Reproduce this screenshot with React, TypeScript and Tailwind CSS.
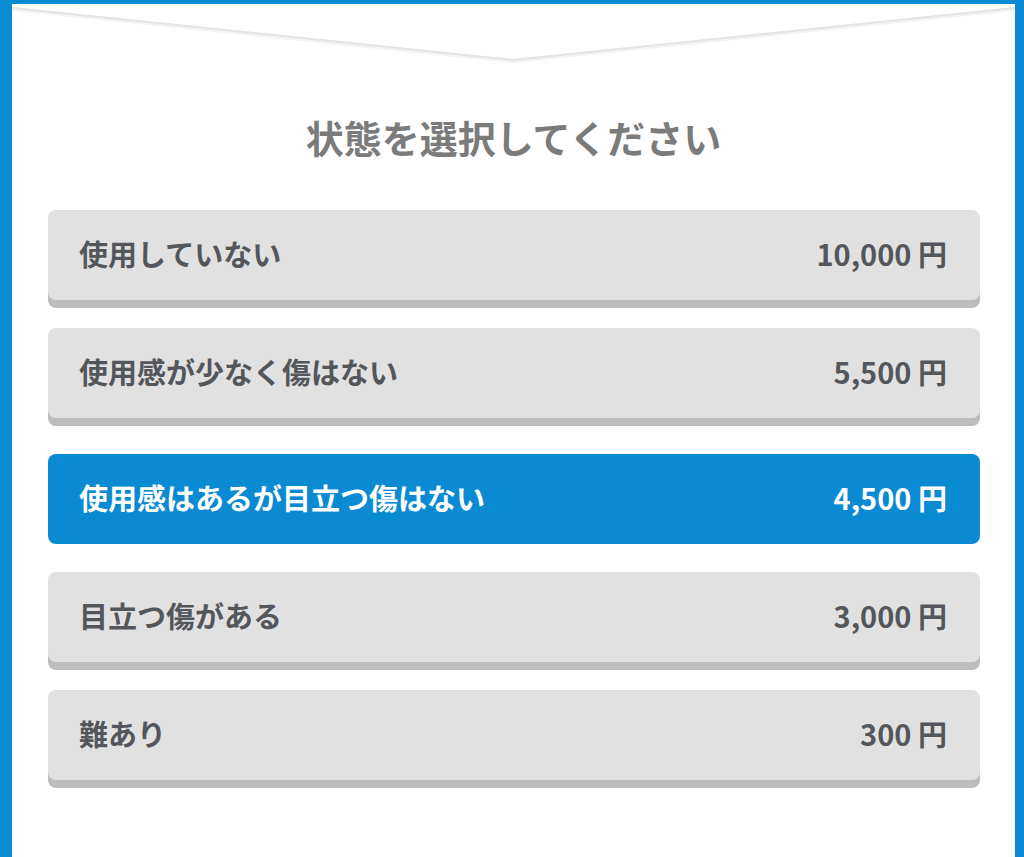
import React from "react";

const options = [
  { label: "使用していない", price: "10,000 円" },
  { label: "使用感が少なく傷はない", price: "5,500 円" },
  { label: "使用感はあるが目立つ傷はない", price: "4,500 円" },
  { label: "目立つ傷がある", price: "3,000 円" },
  { label: "難あり", price: "300 円" },
];

const font = { fontFamily: '"Noto Sans CJK JP", "Noto Sans", sans-serif' };

export default function App() {
  const selected = 2;

  return (
    <div className="h-[857px] w-[1024px] bg-[#0b8ad4] pt-[4px] pl-[12px] pr-[9px]" style={font}>
      <div className="h-full bg-white">
        {/* chevron from the step above */}
        <svg className="block w-full h-[64px]" viewBox="0 0 1003 64" preserveAspectRatio="none">
          <polyline points="0,5 501,57 1003,5" fill="none" stroke="#f4f4f4" strokeWidth="4" />
          <polyline points="0,4 501,56 1003,4" fill="none" stroke="#e4e4e4" strokeWidth="2" />
        </svg>

        <h1 className="mt-[49px] mb-[53px] text-center text-[38px] leading-[40px] font-bold text-[#7b7b7b]">
          状態を選択してください
        </h1>

        <div className="flex flex-col gap-[20px] pl-[36px] pr-[35px]">
          {options.map((o, i) =>
            i === selected ? (
              <div key={o.label} className="py-[8px]">
                <div className="flex h-[90px] items-center justify-between rounded-[8px] bg-[#0b8ad4] pb-[3px] pl-[31px] pr-[33px] text-[29px] font-bold text-white">
                  <span>{o.label}</span>
                  <span>{o.price}</span>
                </div>
              </div>
            ) : (
              <div key={o.label} className="pb-[8px]">
                <div className="flex h-[90px] items-center justify-between rounded-[8px] bg-[#e1e1e1] pb-[3px] pl-[31px] pr-[33px] text-[29px] font-bold text-[#53575b] shadow-[0_8px_0_#bdbdbd]">
                  <span>{o.label}</span>
                  <span>{o.price}</span>
                </div>
              </div>
            )
          )}
        </div>
      </div>
    </div>
  );
}
